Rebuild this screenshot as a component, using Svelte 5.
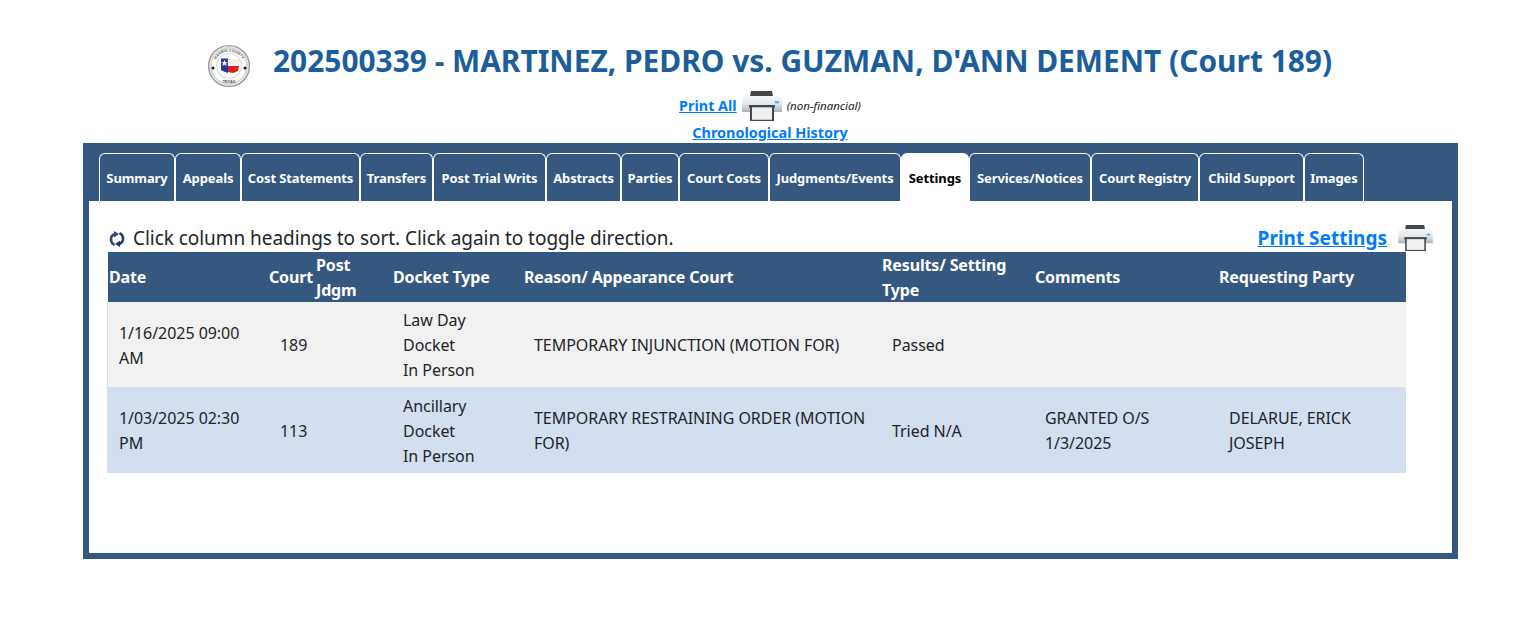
<script>
	const tabs = ['Summary', 'Appeals', 'Cost Statements', 'Transfers', 'Post Trial Writs', 'Abstracts', 'Parties', 'Court Costs', 'Judgments/Events', 'Settings', 'Services/Notices', 'Court Registry', 'Child Support', 'Images'];
	const active = 'Settings';
	const rows = [
		{ date: '1/16/2025 09:00 AM', court: '189', type: ['Law Day', 'Docket', 'In Person'], reason: 'TEMPORARY INJUNCTION (MOTION FOR)', result: 'Passed', comments: '', party: '' },
		{ date: '1/03/2025 02:30 PM', court: '113', type: ['Ancillary', 'Docket', 'In Person'], reason: 'TEMPORARY RESTRAINING ORDER (MOTION FOR)', result: 'Tried N/A', comments: 'GRANTED O/S 1/3/2025', party: 'DELARUE, ERICK JOSEPH' }
	];
</script>

{#snippet printer(cls, id)}
	<svg class={cls} viewBox="0 0 40 30" aria-hidden="true">
		<defs>
			<linearGradient id={id} x1="0" y1="0" x2="0" y2="1">
				<stop offset="0" stop-color="#f6f8f9" />
				<stop offset="0.5" stop-color="#e3e7ea" />
				<stop offset="1" stop-color="#a8afb5" />
			</linearGradient>
		</defs>
		<path d="M8 5 L9 0 H30 L31 5 Z" fill="#47484e" />
		<path d="M4 5 H36 Q40 5 40 9 V21 H0 V9 Q0 5 4 5 Z" fill="url(#{id})" />
		<rect x="33" y="10" width="4" height="2.4" fill="#62b4e6" />
		<rect x="7" y="14" width="26" height="2.5" fill="#47484e" />
		<rect x="8" y="15" width="2" height="15" fill="#47484e" />
		<rect x="30" y="15" width="2" height="15" fill="#47484e" />
		<rect x="8" y="28.5" width="24" height="1.5" fill="#47484e" />
		<rect x="10" y="16.5" width="20" height="12" fill="#efefef" />
	</svg>
{/snippet}

<div class="page">
	<h1>
		<svg class="seal" viewBox="0 0 42 44" aria-hidden="true">
			<circle cx="21" cy="22" r="20.4" fill="#ededed" stroke="#9a9a9a" stroke-width="1.4" />
			<circle cx="21" cy="22" r="18" fill="#fafafa" stroke="#b5b5b5" stroke-width="0.8" />
			<circle cx="21" cy="22" r="12.5" fill="#fff" stroke="#bdbdbd" stroke-width="0.6" />
			<path id="seal-top" d="M6.5 22 A14.5 14.5 0 0 1 35.5 22" fill="none" />
			<text class="seal-text"><textPath href="#seal-top" startOffset="50%" text-anchor="middle">HARRIS COUNTY</textPath></text>
			<text class="seal-text" x="21" y="38.5" text-anchor="middle">TEXAS</text>
			<path d="M13 14.5 H20 V29 L16 27.5 L13 26 Z" fill="#27349c" />
			<path d="M20 15.5 C24 14.5 27 16.5 31 16 V22 H20 Z" fill="#f2f2f2" stroke="#d0d0d0" stroke-width="0.3" />
			<path d="M20 22 H31 L30 27 L25 29 L20 28 Z" fill="#d8211f" />
			<path d="M16.5 18 L17.4 20.6 L20 20.6 L17.9 22.2 L18.7 24.8 L16.5 23.2 L14.3 24.8 L15.1 22.2 L13 20.6 L15.6 20.6 Z" fill="#fff" transform="translate(0 -.4) scale(1 .9)" />
			<circle cx="5" cy="24" r="1.5" fill="#1d1d1d" />
			<circle cx="37" cy="24" r="1.5" fill="#1d1d1d" />
		</svg>
		<span>202500339 - MARTINEZ, PEDRO vs. GUZMAN, D'ANN DEMENT (Court 189)</span>
	</h1>

	<div class="links">
		<div class="print-all">
			<a href="#all">Print All</a>
			{@render printer('icon-all', 'pg1')}
			<em>(non-financial)</em>
		</div>
		<a href="#history">Chronological History</a>
	</div>

	<div class="frame">
		<div class="tabs">
			{#each tabs as t}
				<div class="tab" class:active={t === active}>{t}</div>
			{/each}
		</div>
		<div class="panel">
			<div class="hint">
				<div class="hint-left">
					<svg class="sort" viewBox="0 0 16 16" aria-hidden="true">
						<path d="M5.5 14 C0.8 11.5 0.5 5 6 3" fill="none" stroke="#31466f" stroke-width="2.5" />
						<path d="M5 0 L10 3 L5 6.5 Z" fill="#31466f" />
						<path d="M10.5 2 C15.2 4.5 15.5 11 10 13" fill="none" stroke="#1f3a6d" stroke-width="2.5" />
						<path d="M11 16 L6 13 L11 9.5 Z" fill="#1f3a6d" />
					</svg>
					<span>Click column headings to sort. Click again to toggle direction.</span>
				</div>
				<div class="hint-right">
					<a href="#settings">Print Settings</a>
					{@render printer('icon-settings', 'pg2')}
				</div>
			</div>
			<table>
				<colgroup>
					<col class="c-date" /><col class="c-court" /><col class="c-post" /><col class="c-type" /><col class="c-reason" /><col class="c-result" /><col class="c-comments" /><col class="c-party" />
				</colgroup>
				<thead>
					<tr>
						<th>Date</th>
						<th>Court</th>
						<th>Post Jdgm</th>
						<th>Docket Type</th>
						<th>Reason/ Appearance Court</th>
						<th>Results/ Setting Type</th>
						<th>Comments</th>
						<th>Requesting Party</th>
					</tr>
				</thead>
				<tbody>
					{#each rows as r}
						<tr>
							<td>{r.date}</td>
							<td class="num">{r.court}</td>
							<td></td>
							<td>{#each r.type as line}<div>{line}</div>{/each}</td>
							<td>{r.reason}</td>
							<td>{r.result}</td>
							<td>{r.comments}</td>
							<td>{r.party}</td>
						</tr>
					{/each}
				</tbody>
			</table>
		</div>
	</div>
</div>

<style>
	:global(body) { margin: 0; background: #fff; font-family: "Noto Sans", "Open Sans", sans-serif; color: #212529; }
	.page { width: 1523px; height: 637px; overflow: hidden; }
	a { color: #007bff; font-weight: 700; text-decoration: underline; }

	h1 { margin: 0; padding-top: 44px; padding-left: 208px; height: 43px; display: flex; align-items: flex-start; gap: 23px; font-size: 29.9px; line-height: 34px; font-weight: 700; color: #1b5e9b; white-space: nowrap; }
	.seal { width: 42px; height: 44px; flex: none; }
	.seal-text { font-size: 3.8px; font-weight: 700; fill: #555; font-family: "Liberation Sans", sans-serif; }

	.links { display: flex; flex-direction: column; align-items: center; font-size: 14.4px; line-height: 20px; margin-top: 2px; padding-left: 17px; }
	.print-all { display: flex; align-items: center; gap: 5px; height: 34px; }
	.print-all em { font-size: 11.5px; color: #212529; }
	.icon-all { width: 40px; height: 30px; }

	.frame { box-sizing: border-box; margin: 0 0 0 83px; width: 1375px; height: 416px; background: #355881; padding: 10px 6px 6px; }
	.tabs { display: grid; grid-template-columns: 76px 66px 119px 73px 113px 75px 58px 90px 132px 68px 122px 108px 105px 60px; margin-left: 10px; height: 48px; }
	.tab { box-sizing: border-box; display: flex; align-items: center; justify-content: center; border: 1px solid #fff; border-bottom: 0; border-radius: 6px 6px 0 0; font-size: 13px; font-weight: 700; color: #fff; padding-top: 1px; white-space: nowrap; letter-spacing: -0.1px; }
	.tab.active { background: #fff; color: #000; }

	.panel { box-sizing: border-box; height: 352px; background: #fff; padding: 22px 18px 0 19px; }
	.hint { display: flex; justify-content: space-between; align-items: center; height: 29px; width: 1325px; font-size: 19px; }
	.hint-left { display: flex; align-items: center; gap: 8px; padding-left: 1px; letter-spacing: -0.05px; }
	.sort { width: 16px; height: 16px; margin-top: 2px; }
	.hint-right { display: flex; align-items: center; gap: 11px; }
	.icon-settings { width: 35px; height: 26px; }

	table { border-collapse: collapse; table-layout: fixed; width: 1298px; font-size: 16px; letter-spacing: -0.05px; line-height: 25px; }
	.c-date { width: 160px; }
	.c-court { width: 47px; }
	.c-post { width: 77px; }
	.c-type { width: 131px; }
	.c-reason { width: 358px; }
	.c-result { width: 153px; }
	.c-comments { width: 184px; }
	.c-party { width: 188px; }
	thead tr { background: #355881; color: #fff; height: 50px; }
	th { padding: 1px 1px 0; line-height: 24.5px; text-align: left; font-weight: 700; letter-spacing: -0.15px; }
	td { padding: 6px 10px 4px 11px; height: 75px; vertical-align: middle; }
	td:first-child { box-shadow: -1px 0 #dcdcdc; }
	td.num { padding-left: 12px; }
	tbody tr:nth-child(odd) { background: #f1f1f1; }
	tbody tr:nth-child(even) { background: #d3deef; }
	tbody tr:nth-child(even) td { height: 76px; }
</style>
